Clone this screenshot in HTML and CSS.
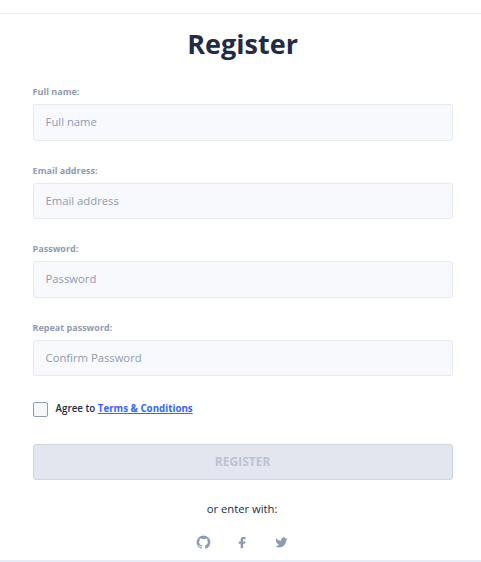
FILE: index.html
```
<!DOCTYPE html>
<html lang="en">
<head>
  <meta charset="UTF-8">
  <meta name="viewport" content="width=device-width, initial-scale=1.0">
  <title>Register</title>
  <link rel="stylesheet" href="styles.css">
</head>
<body>
  <main class="card">
    <h1 class="title">Register</h1>
    <form class="register-form">
      <div class="form-group">
        <label for="name">Full name:</label>
        <input type="text" id="name" placeholder="Full name">
      </div>
      <div class="form-group">
        <label for="email">Email address:</label>
        <input type="text" id="email" placeholder="Email address">
      </div>
      <div class="form-group">
        <label for="password">Password:</label>
        <input type="password" id="password" placeholder="Password">
      </div>
      <div class="form-group">
        <label for="confirm">Repeat password:</label>
        <input type="password" id="confirm" placeholder="Confirm Password">
      </div>
      <div class="terms">
        <input type="checkbox" id="terms">
        <label for="terms">Agree to <a href="#">Terms &amp; Conditions</a></label>
      </div>
      <button type="submit" disabled>Register</button>
    </form>

    <section class="links">
      <p>or enter with:</p>
      <div class="socials">
        <a href="#" aria-label="GitHub">
          <svg viewBox="0 0 24 24"><path d="M12 1A10.89 10.89 0 0 0 1 11.77 10.79 10.79 0 0 0 8.52 22c.55.1.75-.23.75-.52v-1.83c-3.06.65-3.71-1.44-3.71-1.44a2.86 2.86 0 0 0-1.22-1.58c-1-.66.08-.65.08-.65a2.31 2.31 0 0 1 1.68 1.11 2.37 2.37 0 0 0 3.2.89 2.33 2.33 0 0 1 .7-1.44c-2.44-.27-5-1.19-5-5.32a4.15 4.15 0 0 1 1.11-2.91 3.78 3.78 0 0 1 .11-2.84s.93-.29 3 1.1a10.68 10.68 0 0 1 5.5 0c2.1-1.39 3-1.1 3-1.1a3.78 3.78 0 0 1 .11 2.84A4.15 4.15 0 0 1 19 11.2c0 4.14-2.58 5.05-5 5.32a2.5 2.5 0 0 1 .75 2v2.95c0 .35.2.63.75.52A10.8 10.8 0 0 0 23 11.77 10.89 10.89 0 0 0 12 1"/></svg>
        </a>
        <a href="#" aria-label="Facebook">
          <svg viewBox="0 0 24 24"><path d="M17 3.5a.5.5 0 0 0-.5-.5H14a4.77 4.77 0 0 0-5 4.5v2.7H6.5a.5.5 0 0 0-.5.5v2.6a.5.5 0 0 0 .5.5H9v6.7a.5.5 0 0 0 .5.5h3a.5.5 0 0 0 .5-.5v-6.7h2.62a.5.5 0 0 0 .49-.37l.72-2.6a.5.5 0 0 0-.48-.63H13V7.5a1 1 0 0 1 1-.9h2.5a.5.5 0 0 0 .5-.5z"/></svg>
        </a>
        <a href="#" aria-label="Twitter">
          <svg viewBox="0 0 24 24"><path d="M8.08 20A11.07 11.07 0 0 0 19.52 9 8.09 8.09 0 0 0 21 6.16a.44.44 0 0 0-.62-.51 1.88 1.88 0 0 1-2.16-.38 3.89 3.89 0 0 0-5.58-.17A4.13 4.13 0 0 0 11.49 9C8.14 9.2 5.84 7.61 4 5.43a.43.43 0 0 0-.75.24 9.68 9.68 0 0 0 4.6 10.05A6.73 6.73 0 0 1 3.38 18a.45.45 0 0 0-.14.84A11 11 0 0 0 8.08 20"/></svg>
        </a>
      </div>
    </section>
  </main>
</body>
</html>
```
FILE: styles.css
```
* {
  box-sizing: border-box;
}

body {
  margin: 0;
  padding-top: 13px;
  background-color: #fff;
  color: #222b45;
  font-family: "Open Sans", sans-serif;
}

.card {
  height: 549px;
  padding: 12px 28.4px 0 32.6px;
  border-top: 1px solid #edf0f3;
  border-bottom: 2px solid #e7ecf5;
}

.title {
  margin: 0 0 24px;
  font-size: 27px;
  font-weight: 700;
  line-height: 36px;
  text-align: center;
}

.form-group {
  margin-bottom: 24px;
}

.form-group label {
  display: block;
  margin-bottom: 6px;
  color: #8f9bb3;
  font-size: 9px;
  font-weight: 700;
  line-height: 12px;
}

.form-group input {
  display: block;
  width: 100%;
  height: 36.6px;
  padding: 0 12px 1px;
  border: 1px solid #e4e9f2;
  border-radius: 3px;
  background-color: #f7f9fc;
  font-family: inherit;
  font-size: 11.25px;
}

.form-group input::placeholder {
  color: #8f9bb3;
}

.terms {
  display: flex;
  align-items: center;
  gap: 8px;
  height: 18px;
  margin-bottom: 26px;
  font-size: 9.75px;
  font-weight: 600;
}

.terms input {
  appearance: none;
  width: 15px;
  height: 15px;
  margin: 0;
  border: 1px solid #8f9bb3;
  border-radius: 2px;
  background-color: #f5f7fb;
}

.terms label {
  padding-bottom: 1px;
}

.terms a {
  color: #3366ff;
  font-weight: 700;
}

button {
  display: block;
  width: 100%;
  height: 36px;
  padding: 0 6px 2px;
  border: 1px solid #d0d5e0;
  border-radius: 3px;
  background-color: #e3e6ef;
  color: #bcc3d3;
  font-family: inherit;
  font-size: 12px;
  font-weight: 700;
  text-transform: uppercase;
}

.links {
  margin-top: 20px;
  padding-right: 1px;
  text-align: center;
}

.links p {
  margin: 0;
  font-size: 11.25px;
  line-height: 18px;
}

.socials {
  display: flex;
  justify-content: center;
  gap: 24px;
  margin-top: 17px;
}

.socials svg {
  display: block;
  width: 15px;
  height: 15px;
  fill: #8f9bb3;
}
```
